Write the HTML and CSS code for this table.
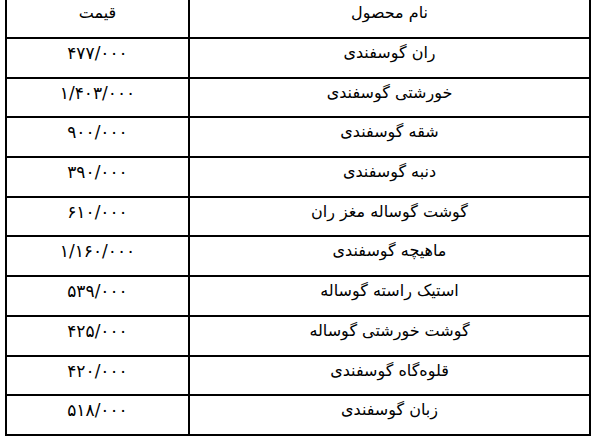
FILE: index.html
```html
<!DOCTYPE html>
<html lang="fa" dir="rtl">
<head>
<meta charset="utf-8">
<title>قیمت گوشت</title>
<link rel="stylesheet" href="styles.css">
</head>
<body>
<table class="prices">
  <thead>
    <tr><th class="name">نام محصول</th><th class="price">قیمت</th></tr>
  </thead>
  <tbody>
    <tr><td class="name">ران گوسفندی</td><td class="price">۴۷۷/۰۰۰</td></tr>
    <tr><td class="name">خورشتی گوسفندی</td><td class="price">۱/۴۰۳/۰۰۰</td></tr>
    <tr><td class="name">شقه گوسفندی</td><td class="price">۹۰۰/۰۰۰</td></tr>
    <tr><td class="name">دنبه گوسفندی</td><td class="price">۳۹۰/۰۰۰</td></tr>
    <tr><td class="name">گوشت گوساله مغز ران</td><td class="price">۶۱۰/۰۰۰</td></tr>
    <tr><td class="name">ماهیچه گوسفندی</td><td class="price">۱/۱۶۰/۰۰۰</td></tr>
    <tr><td class="name">استیک راسته گوساله</td><td class="price">۵۳۹/۰۰۰</td></tr>
    <tr><td class="name">گوشت خورشتی گوساله</td><td class="price">۴۲۵/۰۰۰</td></tr>
    <tr><td class="name">قلوه‌گاه گوسفندی</td><td class="price">۴۲۰/۰۰۰</td></tr>
    <tr><td class="name">زبان گوسفندی</td><td class="price">۵۱۸/۰۰۰</td></tr>
  </tbody>
</table>
</body>
</html>
```
FILE: styles.css
```css
html, body {
  margin: 0;
  padding: 0;
  background: #fff;
}
body {
  font-family: "DejaVu Sans", sans-serif;
  font-size: 16px;
  color: #000;
}
.prices {
  border-collapse: collapse;
  width: 586px;
  margin: -2px 0 0 1px;
  table-layout: fixed;
}
.prices th,
.prices td {
  border: 2px solid #000;
  font-weight: normal;
  text-align: center;
  vertical-align: top;
  padding: 4px 0 0 0;
  height: 33.7px;
  line-height: 20px;
}
.prices thead th {
  height: 34px;
  padding-top: 3px;
}
.prices td.price {
  font-size: 17px;
}
.prices .price {
  width: 181px;
}
```
